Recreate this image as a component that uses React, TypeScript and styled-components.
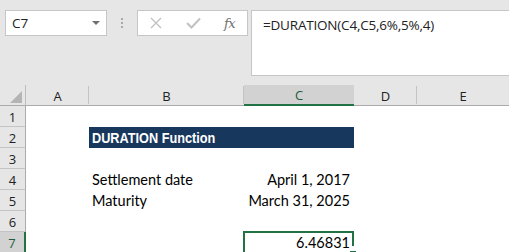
import React from "react";
import styled, { createGlobalStyle, css } from "styled-components";

const Global = createGlobalStyle`
  html, body { margin: 0; padding: 0; background: #ffffff; overflow: hidden; }
  #root { width: 509px; height: 252px; overflow: hidden; }
`;

const GREEN = "#217346";
const UI_FONT = `"Open Sans", "Noto Sans", sans-serif`;
const CELL_FONT = `"Lato", "Liberation Sans", sans-serif`;

const Page = styled.div`
  width: 509px;
  height: 252px;
  display: flex;
  flex-direction: column;
  overflow: hidden;
`;

const FormulaBar = styled.div`
  height: 85px;
  flex: none;
  background: #e6e6e6;
  display: flex;
  align-items: flex-start;
  padding: 10px 0 0 5px;
  box-sizing: border-box;
`;

const NameBox = styled.div`
  width: 102px;
  height: 26px;
  box-sizing: border-box;
  background: #fff;
  border: 1px solid #c6c6c6;
  display: flex;
  align-items: center;
  justify-content: space-between;
  padding: 0 6px 0 6px;
  font-family: ${UI_FONT};
  font-size: 13.5px;
  color: #222;
`;

const Caret = styled.span`
  width: 0;
  height: 0;
  border-left: 4px solid transparent;
  border-right: 4px solid transparent;
  border-top: 4px solid #707070;
`;

const Grip = styled.div`
  width: 2px;
  height: 26px;
  margin: 0 14px 0 14px;
  display: flex;
  flex-direction: column;
  justify-content: center;
  gap: 2px;
  & > span {
    width: 2px;
    height: 2px;
    background: #a8a8a8;
  }
`;

const ButtonBox = styled.div`
  width: 111px;
  height: 26px;
  box-sizing: border-box;
  background: #fff;
  border: 1px solid #c6c6c6;
  display: flex;
  align-items: center;
  padding: 0 0 0 12px;
`;

const BarIcon = styled.span<{ $w: number }>`
  width: ${(p) => p.$w}px;
  display: flex;
  align-items: center;
`;

const Fx = styled.span`
  font-family: "DejaVu Serif", "Liberation Serif", serif;
  font-style: italic;
  font-size: 13px;
  color: #707070;
  letter-spacing: -0.5px;
`;

const FormulaInput = styled.div`
  margin-left: 3px;
  flex: 1;
  height: 66px;
  box-sizing: border-box;
  background: #fff;
  border: 1px solid #c6c6c6;
  border-right: none;
  padding: 5px 0 0 11px;
  font-family: ${UI_FONT};
  font-size: 13.5px;
  color: #222;
  letter-spacing: -0.2px;
`;

const Sheet = styled.div`
  display: grid;
  grid-template-columns: 26px 63px 155px 110px 63px 1fr;
  grid-auto-rows: 21px;
`;

const Corner = styled.div`
  background: #e6e6e6;
  border-right: 1px solid #bdbdbd;
  border-bottom: 1px solid #ababab;
  box-sizing: border-box;
  position: relative;
  &::after {
    content: "";
    position: absolute;
    right: 3px;
    bottom: 2px;
    width: 0;
    height: 0;
    border-left: 12px solid transparent;
    border-bottom: 12px solid #b4b4b4;
  }
`;

const ColHead = styled.div<{ $sel?: boolean; $last?: boolean }>`
  background: ${(p) => (p.$sel ? "#d2d2d2" : "#e6e6e6")};
  box-sizing: border-box;
  border-bottom: ${(p) => (p.$sel ? `2px solid ${GREEN}` : "1px solid #ababab")};
  display: flex;
  align-items: center;
  justify-content: center;
  padding-top: 1px;
  font-family: ${UI_FONT};
  font-size: 13px;
  color: ${(p) => (p.$sel ? "#1e5c3c" : "#222")};
  position: relative;
  ${(p) =>
    !p.$sel &&
    !p.$last &&
    css`
      &::after {
        content: "";
        position: absolute;
        right: 0;
        top: 1px;
        bottom: 1px;
        width: 1px;
        background: #c4c4c4;
      }
    `}
`;

const RowHead = styled.div<{ $sel?: boolean }>`
  background: ${(p) => (p.$sel ? "#d2d2d2" : "#e6e6e6")};
  box-sizing: border-box;
  border-bottom: 1px solid #c4c4c4;
  border-right: ${(p) => (p.$sel ? `2px solid ${GREEN}` : "1px solid #ababab")};
  display: flex;
  align-items: center;
  justify-content: center;
  padding-top: 1px;
  font-family: ${UI_FONT};
  font-size: 13px;
  color: ${(p) => (p.$sel ? "#1e5c3c" : "#222")};
`;

const Cell = styled.div<{ $align?: "left" | "right" }>`
  box-sizing: border-box;
  display: flex;
  align-items: flex-end;
  justify-content: ${(p) => (p.$align === "right" ? "flex-end" : "flex-start")};
  padding: 0 4px 2px 3px;
  font-family: ${CELL_FONT};
  font-size: 14.5px;
  color: #000;
  white-space: nowrap;
  position: relative;
`;

const TitleCell = styled.div`
  grid-column: span 2;
  box-sizing: border-box;
  display: flex;
  align-items: center;
  padding: 1px 0 0 3px;
  background: #17375d;
  overflow: hidden;
`;

const TitleText = styled.span`
  display: inline-block;
  color: #fff;
  font-family: "Liberation Sans", Arial, sans-serif;
  font-weight: bold;
  font-size: 15.5px;
  white-space: nowrap;
  transform: scaleX(0.82);
  transform-origin: left center;
`;

const Selection = styled.div`
  position: absolute;
  left: -1px;
  top: -1px;
  right: 0;
  bottom: -4px;
  border: 2px solid ${GREEN};
  border-bottom: none;
  pointer-events: none;
  &::before {
    content: "";
    position: absolute;
    right: -2px;
    bottom: 6px;
    width: 2px;
    height: 5px;
    background: #fff;
  }
  &::after {
    content: "";
    position: absolute;
    right: -4px;
    bottom: 0px;
    width: 6px;
    height: 6px;
    background: ${GREEN};
    box-shadow: 0 0 0 1px #fff;
  }
`;

const cols = ["A", "B", "C", "D", "E"];

type RowData = { b?: string; c?: string; title?: boolean; sel?: boolean };
const rows: RowData[] = [
  {},
  { title: true, b: "DURATION Function" },
  {},
  { b: "Settlement date", c: "April 1, 2017" },
  { b: "Maturity", c: "March 31, 2025" },
  {},
  { c: "6.46831", sel: true },
];

export default function App() {
  return (
    <Page>
      <Global />
      <FormulaBar>
        <NameBox>
          <span>C7</span>
          <Caret />
        </NameBox>
        <Grip>
          <span />
          <span />
          <span />
        </Grip>
        <ButtonBox>
          <BarIcon $w={36}>
            <svg width="12" height="12" viewBox="0 0 12 12">
              <path d="M1 1 L11 11 M11 1 L1 11" stroke="#c2c2c2" strokeWidth="1.4" fill="none" />
            </svg>
          </BarIcon>
          <BarIcon $w={38}>
            <svg width="15" height="12" viewBox="0 0 15 12">
              <path d="M1 6 L5.5 10.5 L14 1.5" stroke="#c2c2c2" strokeWidth="2" fill="none" />
            </svg>
          </BarIcon>
          <BarIcon $w={20}>
            <Fx>fx</Fx>
          </BarIcon>
        </ButtonBox>
        <FormulaInput>=DURATION(C4,C5,6%,5%,4)</FormulaInput>
      </FormulaBar>
      <Sheet>
        <Corner />
        {cols.map((c, i) => (
          <ColHead key={c} $sel={c === "C"} $last={i === cols.length - 1}>
            {c}
          </ColHead>
        ))}
        {rows.map((r, i) => (
          <React.Fragment key={i}>
            <RowHead $sel={r.sel}>{i + 1}</RowHead>
            <Cell />
            {r.title ? (
              <TitleCell>
                <TitleText>{r.b}</TitleText>
              </TitleCell>
            ) : (
              <>
                <Cell>{r.b}</Cell>
                <Cell $align="right">
                  {r.c}
                  {r.sel && <Selection />}
                </Cell>
              </>
            )}
            <Cell />
            <Cell />
          </React.Fragment>
        ))}
      </Sheet>
    </Page>
  );
}
